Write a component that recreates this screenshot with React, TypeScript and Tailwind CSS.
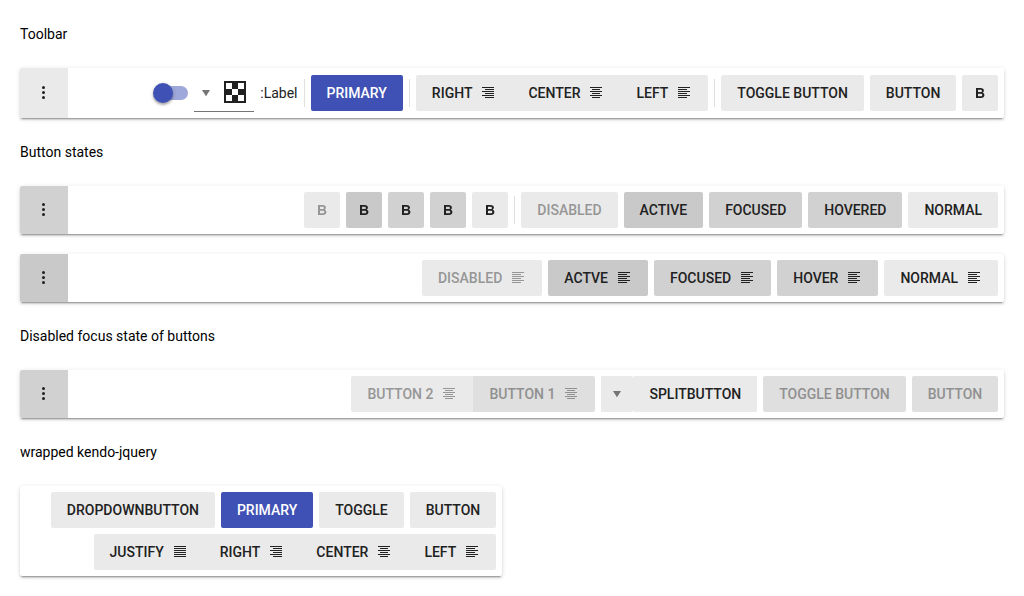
import type { ReactNode } from "react";

type Align = "left" | "center" | "right" | "justify";

const tones = {
  normal: "bg-[#eaeaea] text-[#212121]",
  strong: "bg-[#d1d1d1] text-[#212121]",
  active: "bg-[#c9c9c9] text-[#212121]",
  disabled: "bg-[#eaeaea] text-[#969696]",
  disabledFocus: "bg-[#dfdfdf] text-[#909090]",
  primary: "bg-[#3f51b5] text-white",
};
type Tone = keyof typeof tones;

const alignPaths: Record<Align, string> = {
  left: "M2 2.5h12M2 4.5h9M2 6.5h12M2 8.5h9M2 10.5h12M2 12.5h9",
  right: "M2 2.5h12M5 4.5h9M2 6.5h12M5 8.5h9M2 10.5h12M5 12.5h9",
  center: "M2 2.5h12M4 4.5h8M2 6.5h12M4 8.5h8M2 10.5h12M4 12.5h8",
  justify: "M2 2.5h12M2 4.5h12M2 6.5h12M2 8.5h12M2 10.5h12M2 12.5h12",
};

function AlignIcon({ align }: { align: Align }) {
  return (
    <svg className="size-4 shrink-0" viewBox="0 0 16 16" fill="none" stroke="currentColor">
      <path d={alignPaths[align]} />
    </svg>
  );
}

function Btn({ children, tone = "normal", icon, round = "rounded-[2px]" }: { children: ReactNode; tone?: Tone; icon?: Align; round?: string }) {
  return (
    <button className={`flex h-9 shrink-0 items-center gap-2 font-medium uppercase ${icon ? "px-4" : "px-[15.97px]"} ${round} ${tones[tone]}`}>
      {icon && <AlignIcon align={icon} />}
      <span>{children}</span>
    </button>
  );
}

function Bold({ tone = "normal" }: { tone?: Tone }) {
  return (
    <button className={`flex size-9 shrink-0 items-center justify-center rounded-[2px] ${tones[tone]}`}>
      <svg className="size-4" viewBox="0 0 16 16" fill="currentColor" fillRule="evenodd">
        <path d="M4 3h4.6c2.1 0 3.3.9 3.3 2.6 0 1-.5 1.7-1.3 2.1 1.1.3 1.8 1.1 1.8 2.3 0 1.9-1.3 3-3.5 3H4zM6 4.7v2.4h2.4c1 0 1.5-.4 1.5-1.2s-.5-1.2-1.5-1.2zM6 8.7v2.6h2.7c1 0 1.6-.4 1.6-1.3s-.6-1.3-1.6-1.3z" />
      </svg>
    </button>
  );
}

function Separator() {
  return <span className="h-7 w-px shrink-0 bg-[#e0e0e0]" />;
}

function Caret() {
  return (
    <svg className="size-4" viewBox="0 0 16 16" fill="#757575">
      <path d="M4 5h8l-4 6.2z" />
    </svg>
  );
}

const shadow = "shadow-[0_3px_1px_-2px_rgba(0,0,0,0.2),0_2px_2px_0_rgba(0,0,0,0.14),0_1px_5px_0_rgba(0,0,0,0.12)]";

function Toolbar({ children, tone, size = "h-12 pr-1.5" }: { children: ReactNode; tone: string; size?: string }) {
  return (
    <div dir="rtl" className={`flex items-center gap-1.5 rounded-[2px] bg-white ${size} ${shadow}`}>
      {children}
      <button className={`mr-auto flex h-full w-12 items-center justify-center rounded-l-[2px] ${tone}`}>
        <svg className="size-4" viewBox="0 0 16 16" fill="#212121">
          <circle cx="7.5" cy="2.5" r="1.5" />
          <circle cx="7.5" cy="7.5" r="1.5" />
          <circle cx="7.5" cy="12.5" r="1.5" />
        </svg>
      </button>
    </div>
  );
}

function Heading({ children }: { children: ReactNode }) {
  return <p className="h-5 text-black">{children}</p>;
}

function Group({ items }: { items: { label: string; icon: Align }[] }) {
  return (
    <div className="flex shrink-0 overflow-hidden rounded-[2px]">
      {items.map((i) => (
        <Btn key={i.label} icon={i.icon} round="">{i.label}</Btn>
      ))}
    </div>
  );
}

function ColorPicker() {
  return (
    <div className="flex h-[38px] w-[60px] items-center justify-between border-b border-[#757575] pr-[7px] pb-px pl-1">
      <svg className="size-6" viewBox="0 0 24 24" shapeRendering="crispEdges">
        <path fill="#212121" d="M1 1h22v22H1z" />
        <path fill="#fff" d="M3 3h6v6H3zM15 3h6v6h-6zM9 9h6v6H9zM3 15h6v6H3zM15 15h6v6h-6z" />
      </svg>
      <span className="mt-0.5"><Caret /></span>
    </div>
  );
}

export default function App() {
  return (
    <main className="h-[596px] w-[1024px] overflow-hidden bg-white px-5 pt-6 font-['Roboto',sans-serif] text-sm leading-5">
      <Heading>Toolbar</Heading>
      <div className="mt-6">
        <Toolbar tone="bg-[#eaeaea]" size="h-[50px] pr-[5.65px]">
          <Bold />
          <Btn>Button</Btn>
          <Btn>Toggle button</Btn>
          <Separator />
          <Group items={[{ label: "Left", icon: "left" }, { label: "Center", icon: "center" }, { label: "Right", icon: "right" }]} />
          <Separator />
          <Btn tone="primary">Primary</Btn>
          <Separator />
          <span className="text-[#212121]">Label:</span>
          <ColorPicker />
          <span className="relative h-3.5 w-[26px] rounded-full bg-[#9fa8da]">
            <span className="absolute top-[-3px] left-[-9px] size-5 rounded-full bg-[#3f51b5] shadow-[0_2px_2px_rgba(0,0,0,0.24),0_1px_4px_rgba(0,0,0,0.2)]" />
          </span>
        </Toolbar>
      </div>
      <div className="mt-6"><Heading>Button states</Heading></div>
      <div className="mt-6 flex flex-col gap-5">
        <Toolbar tone="bg-[#d1d1d1]">
          <Btn>Normal</Btn>
          <Btn tone="strong">Hovered</Btn>
          <Btn tone="strong">Focused</Btn>
          <Btn tone="active">Active</Btn>
          <Btn tone="disabled">Disabled</Btn>
          <Separator />
          <Bold />
          <Bold tone="strong" />
          <Bold tone="strong" />
          <Bold tone="active" />
          <Bold tone="disabled" />
        </Toolbar>
        <Toolbar tone="bg-[#c9c9c9]">
          <Btn icon="left">Normal</Btn>
          <Btn icon="left" tone="strong">Hover</Btn>
          <Btn icon="left" tone="strong">Focused</Btn>
          <Btn icon="left" tone="active">Actve</Btn>
          <Btn icon="left" tone="disabled">Disabled</Btn>
        </Toolbar>
      </div>
      <div className="mt-6"><Heading>Disabled focus state of buttons</Heading></div>
      <div className="mt-6">
        <Toolbar tone="bg-[#d1d1d1]" size="h-12 pr-[5.75px]">
          <Btn tone="disabledFocus">Button</Btn>
          <Btn tone="disabledFocus">Toggle button</Btn>
          <div className="flex">
            <Btn round="rounded-l-[2px]">SplitButton</Btn>
            <button className="flex h-9 w-8 items-center justify-center rounded-r-[2px] bg-[#eaeaea]"><Caret /></button>
          </div>
          <div className="flex">
            <Btn icon="center" tone="disabledFocus" round="rounded-r-[2px]">Button 1</Btn>
            <Btn icon="center" tone="disabled" round="rounded-l-[2px]">Button 2</Btn>
          </div>
        </Toolbar>
      </div>
      <div className="mt-6"><Heading>wrapped kendo-jquery</Heading></div>
      <div dir="rtl" className={`mt-6 mr-auto flex h-[90px] w-[482px] flex-col gap-1.5 rounded-[2px] bg-white py-1.5 pr-[5.75px] ${shadow}`}>
        <div className="flex gap-1.5">
          <Btn>Button</Btn>
          <Btn>Toggle</Btn>
          <Btn tone="primary">Primary</Btn>
          <Btn>DropDownButton</Btn>
        </div>
        <div className="flex">
          <Group items={[{ label: "Left", icon: "left" }, { label: "Center", icon: "center" }, { label: "Right", icon: "right" }, { label: "Justify", icon: "justify" }]} />
        </div>
      </div>
    </main>
  );
}
